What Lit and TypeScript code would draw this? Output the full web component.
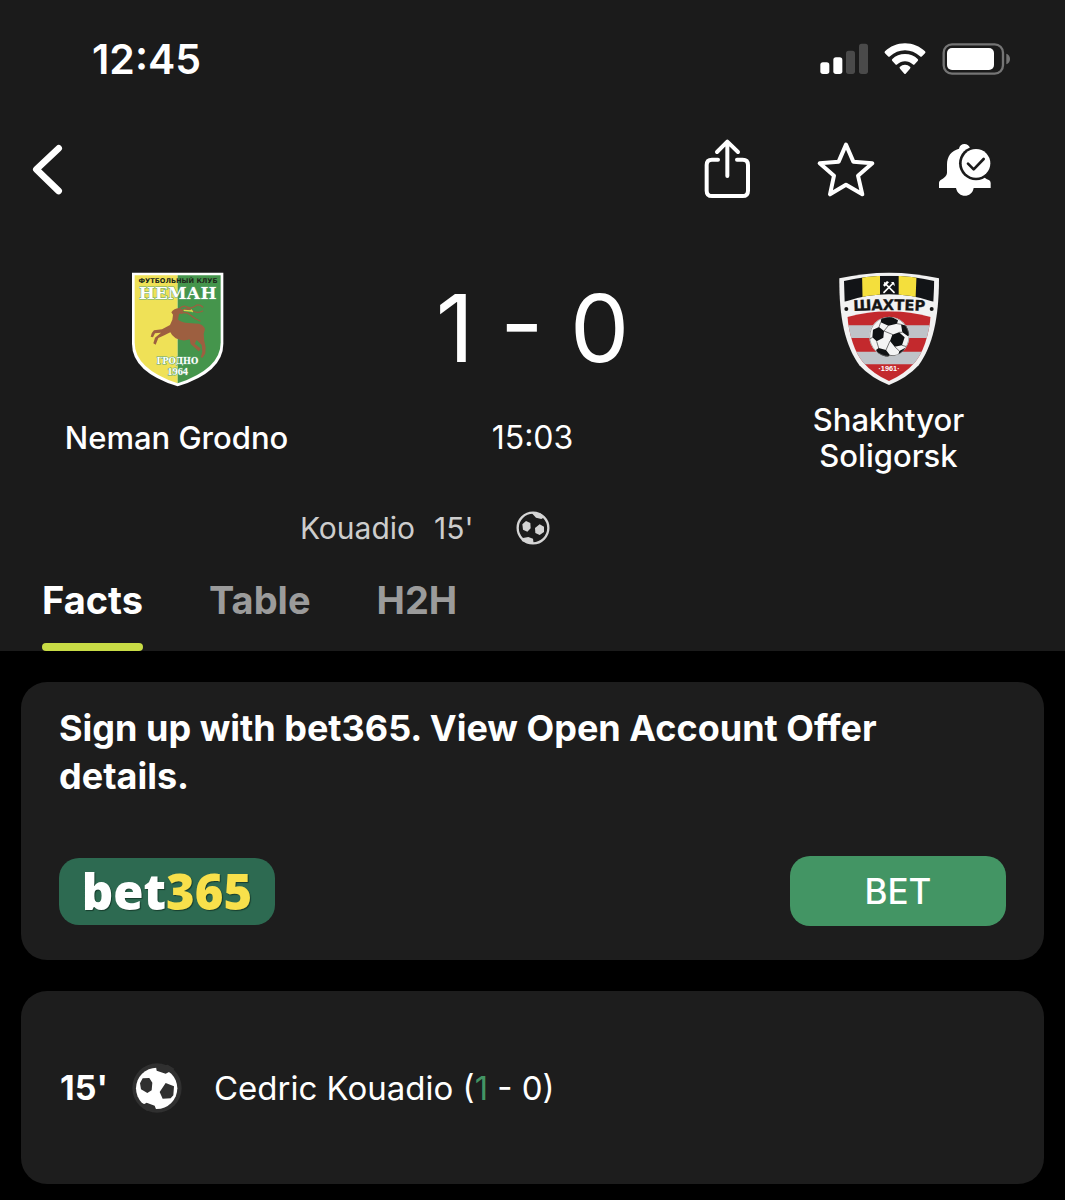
import { LitElement, html, svg, css } from "lit";
import { customElement } from "lit/decorators.js";
import { classMap } from "lit/directives/class-map.js";

@customElement("status-bar")
class StatusBar extends LitElement {
  static styles = css`
    :host { display: flex; align-items: center; justify-content: space-between; height: 118px; padding: 0 54px 0 92px; }
    .time { font-size: 41px; line-height: 48px; font-weight: 600; color: #fff; }
    .icons { display: flex; align-items: center; gap: 14px; }
    svg { display: block; }
    .on { fill: #fff; }
    .off { fill: #4a4a4a; }
    .rim { fill: none; stroke: #757575; stroke-width: 7; }
    .nub { fill: #757575; }
  `;
  render() {
    return html`
      <span class="time">12:45</span>
      <span class="icons">
        <svg width="50" height="32" viewBox="27 36 150 96" aria-hidden="true">
          <rect class="on" x="31" y="94" width="27" height="35" rx="8" />
          <rect class="on" x="70" y="79" width="27" height="50" rx="8" />
          <rect class="off" x="108" y="59" width="27" height="70" rx="8" />
          <rect class="off" x="147" y="38" width="27" height="91" rx="8" />
        </svg>
        <svg width="44" height="32" viewBox="219 36 132 96" aria-hidden="true">
          <path class="on" d="M285 37c24 0 44 9 60 24q3 3 0 6l-9 9q-3 3-6 0c-13-12-28-18-45-18s-32 6-45 18q-3 3-6 0l-9-9q-3-3 0-6c16-15 36-24 60-24z" />
          <path class="on" d="M285 69c15 0 28 5 38 15q3 3 0 6l-9 10q-3 3-6 0c-7-6-14-9-23-9s-16 3-23 9q-3 3-6 0l-9-10q-3-3 0-6c10-10 23-15 38-15z" />
          <path class="on" d="M285 101q9 0 15 6 3 2 0 6l-13 15q-2 2-4 0l-13-15q-3-4 0-6 6-6 15-6z" />
        </svg>
        <svg width="70" height="34" viewBox="393 33 210 102" aria-hidden="true">
          <rect class="rim" x="401" y="40" width="178" height="88" rx="25" />
          <rect class="on" x="411" y="51" width="141" height="66" rx="15" />
          <path class="nub" d="M589 68q11 4 11 16t-11 16z" />
        </svg>
      </span>
    `;
  }
}

@customElement("match-toolbar")
class MatchToolbar extends LitElement {
  static styles = css`
    :host { display: flex; align-items: center; justify-content: space-between; height: 104px; padding: 0 64px 0 12px; }
    .actions { display: flex; gap: 47px; }
    button { width: 72px; height: 72px; padding: 0; border: 0; background: none; color: #fff; cursor: pointer; }
    svg { display: block; }
    .line { fill: none; stroke: #fff; stroke-width: 12; stroke-linecap: round; stroke-linejoin: round; }
    .thick { stroke-width: 20; }
    .solid { fill: #fff; }
    .cut { fill: #1b1b1b; }
    .tick { fill: none; stroke: #1b1b1b; stroke-width: 8; stroke-linecap: round; stroke-linejoin: round; }
  `;
  render() {
    return html`
      <button aria-label="Back">
        <svg width="72" height="72" viewBox="-24 12 216 216"><path class="line thick" d="M116 55 49 118l67 65" /></svg>
      </button>
      <span class="actions">
        <button aria-label="Share">
          <svg width="72" height="72" viewBox="3 12 216 216">
            <path class="line" d="M84 89H66q-16 0-16 16v77q0 16 16 16h92q16 0 16-16v-77q0-16-16-16h-17M112 138V36M81 66l31-31 32 31" />
          </svg>
        </button>
        <button aria-label="Favourite">
          <svg width="72" height="72" viewBox="360 12 216 216">
            <path class="line" d="m468 44 22 51 57 5-43 37 13 56-49-29-48 29 12-56-43-37 57-5z" />
          </svg>
        </button>
        <button aria-label="Notifications">
          <svg width="72" height="72" viewBox="717 12 216 216">
            <path class="solid" d="M807 56c2-19 30-19 34 0 24 7 36 23 36 50v25q2 12 21 20 4 3 4 8v15H851c-5 31-47 31-53 0h-51v-15q0-5 4-8 19-10 20-22v-25c0-26 13-42 36-48z" />
            <circle class="cut" cx="858" cy="100" r="51" />
            <circle class="solid" cx="858" cy="100" r="43" />
            <path class="tick" d="m834 101 17 17 30-31" />
          </svg>
        </button>
      </span>
    `;
  }
}

const nemanCrest = svg`
  <svg class="crest" width="112" height="132" viewBox="0 0 336 396" role="img" aria-label="Neman Grodno">
    <path fill="#fff" d="M33 32H307V245Q307 330 170 373 33 330 33 245z" />
    <path fill="#efe157" d="M41 40H170V364Q41 320 41 242z" />
    <path fill="#45954c" d="M170 40H299V242Q299 320 170 364z" />
    <text x="171" y="64" text-anchor="middle" font-family="DejaVu Sans" font-weight="700" font-size="20" fill="#20271a">ФУТБОЛЬНЫЙ КЛУБ</text>
    <text x="170" y="112" text-anchor="middle" font-family="DejaVu Serif" font-weight="700" font-size="51" fill="#fff" stroke="#62a875" stroke-width="3" paint-order="stroke">НЕМАН</text>
    <path fill="#9d5f40" d="M151 151q8-12 23-13l12 6 1 7-13 5-3 17q12 9 31 10l31 2q15 4 19 16l-4 15 2 22q6 16 3 36l-8 13-6-1 5-16-2-21-15-15-6 11 19 15-7 8-24-22-3-14q-20 8-42-3-12-8-16-18l-18 9-18 8-8 20-7-4 5-17 18-15-18 2-6 12-7-2q2-12 10-19l24-3 24-13 7-16 2-15z" />
    <path fill="none" stroke="#9d5f40" stroke-width="4" stroke-linecap="round" d="M174 141q12-12 21-7 14 8 28-2 10-8 22 3M185 144q18-7 31 3 14 8 29 0M180 154q18-7 29 6 12 11 28 17" />
    <path fill="none" stroke="#d8dc4e" stroke-width="4" d="m188 145 24 2M210 143l5 7" />
    <text x="169" y="307" text-anchor="middle" font-family="DejaVu Serif" font-weight="700" font-size="25" fill="#fff" stroke="#62a875" stroke-width="3" paint-order="stroke">ГРОДНО</text>
    <text x="170" y="339" text-anchor="middle" font-family="Liberation Serif" font-weight="700" font-size="31" fill="#fff" stroke="#62a875" stroke-width="3" paint-order="stroke">1964</text>
  </svg>
`;

const shakhtyorCrest = svg`
  <svg class="crest" width="114" height="126" viewBox="0 0 342 378" role="img" aria-label="Shakhtyor Soligorsk">
    <defs>
      <clipPath id="band"><path d="M36 48Q171 16 307 48L304 110Q171 66 38 110z" /></clipPath>
      <clipPath id="field"><path d="M46 156Q171 122 296 156 286 246 249 292 218 328 171 348 124 328 93 292 56 246 46 156z" /></clipPath>
      <clipPath id="ball"><circle cx="172" cy="215" r="60" /></clipPath>
      <path id="arc" d="M50 139Q171 131 293 139" />
    </defs>
    <path fill="#f2f2f2" d="M22 40Q171 6 321 40C321 160 302 243 260 301Q225 339 171 360 117 339 82 301C40 243 21 160 22 40z" />
    <g clip-path="url(#band)">
      <path fill="#121417" d="M30 20h280v100H30z" />
      <path fill="#f4df3c" d="M90 20h54v100H92zM200 20h54l-4 100h-50z" />
    </g>
    <path fill="none" stroke="#fff" stroke-width="5" stroke-linecap="round" d="m158 54 28 28M184 54l-28 28" />
    <path fill="#fff" d="m153 60 12-12 6 4-13 13zM177 52q12-4 11 12l-5-6z" />
    <text font-family="DejaVu Sans" font-weight="700" font-size="44" fill="#151515" stroke="#151515" stroke-width="1" text-anchor="middle"><textPath href="#arc" startOffset="50%">ШАХТЕР</textPath></text>
    <circle cx="43" cy="132" r="6" fill="#151515" /><circle cx="299" cy="132" r="6" fill="#151515" />
    <g clip-path="url(#field)">
      <path fill="#c3292d" d="M40 110h262v250H40z" />
      <path fill="#bfc3c8" d="M40 181h262v38H40zM40 260h262v38H40z" />
    </g>
    <circle cx="172" cy="215" r="60" fill="#f4f4f4" />
    <g clip-path="url(#ball)">
      <path fill="#101214" d="m148 160 27-6 23 12-3 10-26 6-23-10zM123 194l18-8 15 12-2 20-20 11-13-12zM181 209l20-7 17 15-8 24-22 4-14-17zM207 178l17 4 12 24-8 8-17-12zM140 249l22 6 12 16-10 8-24-10-8-14zM202 258l18-10-8 18-14 8z" />
      <path fill="none" stroke="#333" stroke-width="2" d="m146 172-5 14M156 198l27 11M169 182l-13 16M195 176l12 2M211 202l-10 0M134 229l6 20M174 228l-12 27M188 245l14 13M118 180l8-16M122 217l-10 5M210 241l14 4M174 271l24 3" />
      <circle cx="172" cy="215" r="59" fill="none" stroke="#777" stroke-width="2" />
    </g>
    <text x="171" y="318" text-anchor="middle" font-family="Liberation Sans" font-weight="700" font-size="22" fill="#fff">·1961·</text>
  </svg>
`;

@customElement("match-score")
class MatchScore extends LitElement {
  static styles = css`
    :host { display: grid; grid-template-columns: 1fr 1fr 1fr; column-gap: 3px; padding-top: 40px; color: #fff; }
    .side { display: flex; flex-direction: column; align-items: center; gap: 8px; }
    .emblem { display: flex; align-items: center; height: 132px; }
    .crest { display: block; }
    .score { font-size: 94px; line-height: 132px; font-weight: 400; white-space: nowrap; }
    .name { display: flex; align-items: center; justify-content: center; min-height: 72px; max-width: 240px; text-align: center; font-size: 31px; line-height: 36px; font-weight: 500; }
    .clock { font-size: 32px; font-weight: 400; }
  `;
  render() {
    return html`
      <div class="side"><div class="emblem">${nemanCrest}</div><div class="name">Neman Grodno</div></div>
      <div class="side"><div class="score">1 - 0</div><div class="name clock">15:03</div></div>
      <div class="side"><div class="emblem">${shakhtyorCrest}</div><div class="name">Shakhtyor Soligorsk</div></div>
    `;
  }
}

@customElement("match-tabs")
class MatchTabs extends LitElement {
  static properties = { items: { type: Array }, active: { type: String } };
  declare items: string[];
  declare active: string;
  static styles = css`
    :host { display: block; }
    nav { display: flex; gap: 66px; padding: 0 42px; }
    a { display: flex; flex-direction: column; justify-content: space-between; height: 78px; color: #9b9b9b; font-size: 38px; line-height: 54px; font-weight: 700; text-decoration: none; }
    .current { color: #fff; }
    .bar { height: 8px; border-radius: 4px; }
    .current .bar { background: #c8dc45; }
  `;
  render() {
    return html`<nav>
      ${this.items.map((t) => html`<a href="#${t.toLowerCase()}" class=${classMap({ current: t === this.active })}>${t}<span class="bar"></span></a>`)}
    </nav>`;
  }
}

@customElement("app-root")
class AppRoot extends LitElement {
  static styles = css`
    :host { display: block; min-height: 100vh; box-sizing: border-box; background: #000; color: #fff; font-family: Inter, "Liberation Sans", sans-serif; }
    header { background: #1b1b1b; }
    .scorers { display: grid; grid-template-columns: 1fr auto 1fr; align-items: center; gap: 42px; height: 72px; margin-top: 18px; margin-bottom: 9px; color: #cdcdcd; font-size: 30px; line-height: 40px; }
    .home { display: flex; justify-content: flex-end; gap: 19px; }
    svg { display: block; }
    main { display: flex; flex-direction: column; gap: 31px; padding: 31px 21px 16px; }
    section { background: #1d1d1d; border-radius: 26px; }
    .offer { padding: 22px 38px 34px; }
    h2 { margin: 0; font-size: 36px; line-height: 48px; font-weight: 700; }
    .row { display: flex; align-items: center; justify-content: space-between; margin-top: 56px; }
    .brand { display: flex; align-items: center; justify-content: center; width: 216px; height: 67px; border-radius: 20px; background: #2d6a51; color: #fff; font-family: "Open Sans", sans-serif; font-size: 49px; line-height: 60px; font-weight: 800; text-decoration: none; text-shadow: 1px 1px 1px #173d2d; }
    .gold { color: #f8e04b; }
    .bet { width: 216px; height: 70px; border: 0; border-radius: 20px; background: #439564; color: #fff; font-family: inherit; font-size: 35px; font-weight: 500; cursor: pointer; }
    .event { display: flex; align-items: center; min-height: 193px; padding: 0 39px; font-size: 33px; line-height: 44px; }
    .minute { width: 72px; font-size: 34px; font-weight: 700; }
    .player { margin-left: 32px; }
    .mark { color: #439564; }
  `;
  render() {
    return html`
      <header>
        <status-bar></status-bar>
        <match-toolbar></match-toolbar>
        <match-score></match-score>
        <div class="scorers">
          <div class="home"><span>Kouadio</span><span>15'</span></div>
          <svg width="34" height="34" viewBox="706 31 102 102" aria-hidden="true">
            <circle cx="757" cy="82" r="46" fill="none" stroke="#d4d4d4" stroke-width="7" />
            <path fill="#d4d4d4" d="m736 61 13 6 1 16-10 10-13-6-2-16zM777 71l13 7v16l-13 9-13-6-1-15zM751 35l28 3 12 12-9 5-16-4zM723 121l4-9 16-3 14 5 2 15-17-1z" />
          </svg>
        </div>
        <match-tabs .items=${["Facts", "Table", "H2H"]} .active=${"Facts"}></match-tabs>
      </header>
      <main>
        <section class="offer">
          <h2>Sign up with bet365. View Open Account Offer details.</h2>
          <div class="row">
            <a class="brand" href="#bet365"><span>bet<span class="gold">365</span></span></a>
            <button class="bet">BET</button>
          </div>
        </section>
        <section class="event">
          <span class="minute">15'</span>
          <svg width="50" height="50" viewBox="247 37 150 150" aria-hidden="true">
            <circle cx="322" cy="112" r="74" fill="#303030" />
            <circle cx="321" cy="113" r="62" fill="#fff" />
            <path fill="#303030" d="m319 48 2 12 27 9 10-5 8 2 8-12-20-12zM272 163l4-5 8 2 7-4 24 9 5 13-28 3z" />
            <path fill="#303030" d="m279 83 20-1 9 14-2 23-13 8-19-11-3-18zM348 97l25 10-2 27-8 9-24 1-9-20z" />
          </svg>
          <span class="player">Cedric Kouadio (<span class="mark">1</span> - 0)</span>
        </section>
      </main>
    `;
  }
}
